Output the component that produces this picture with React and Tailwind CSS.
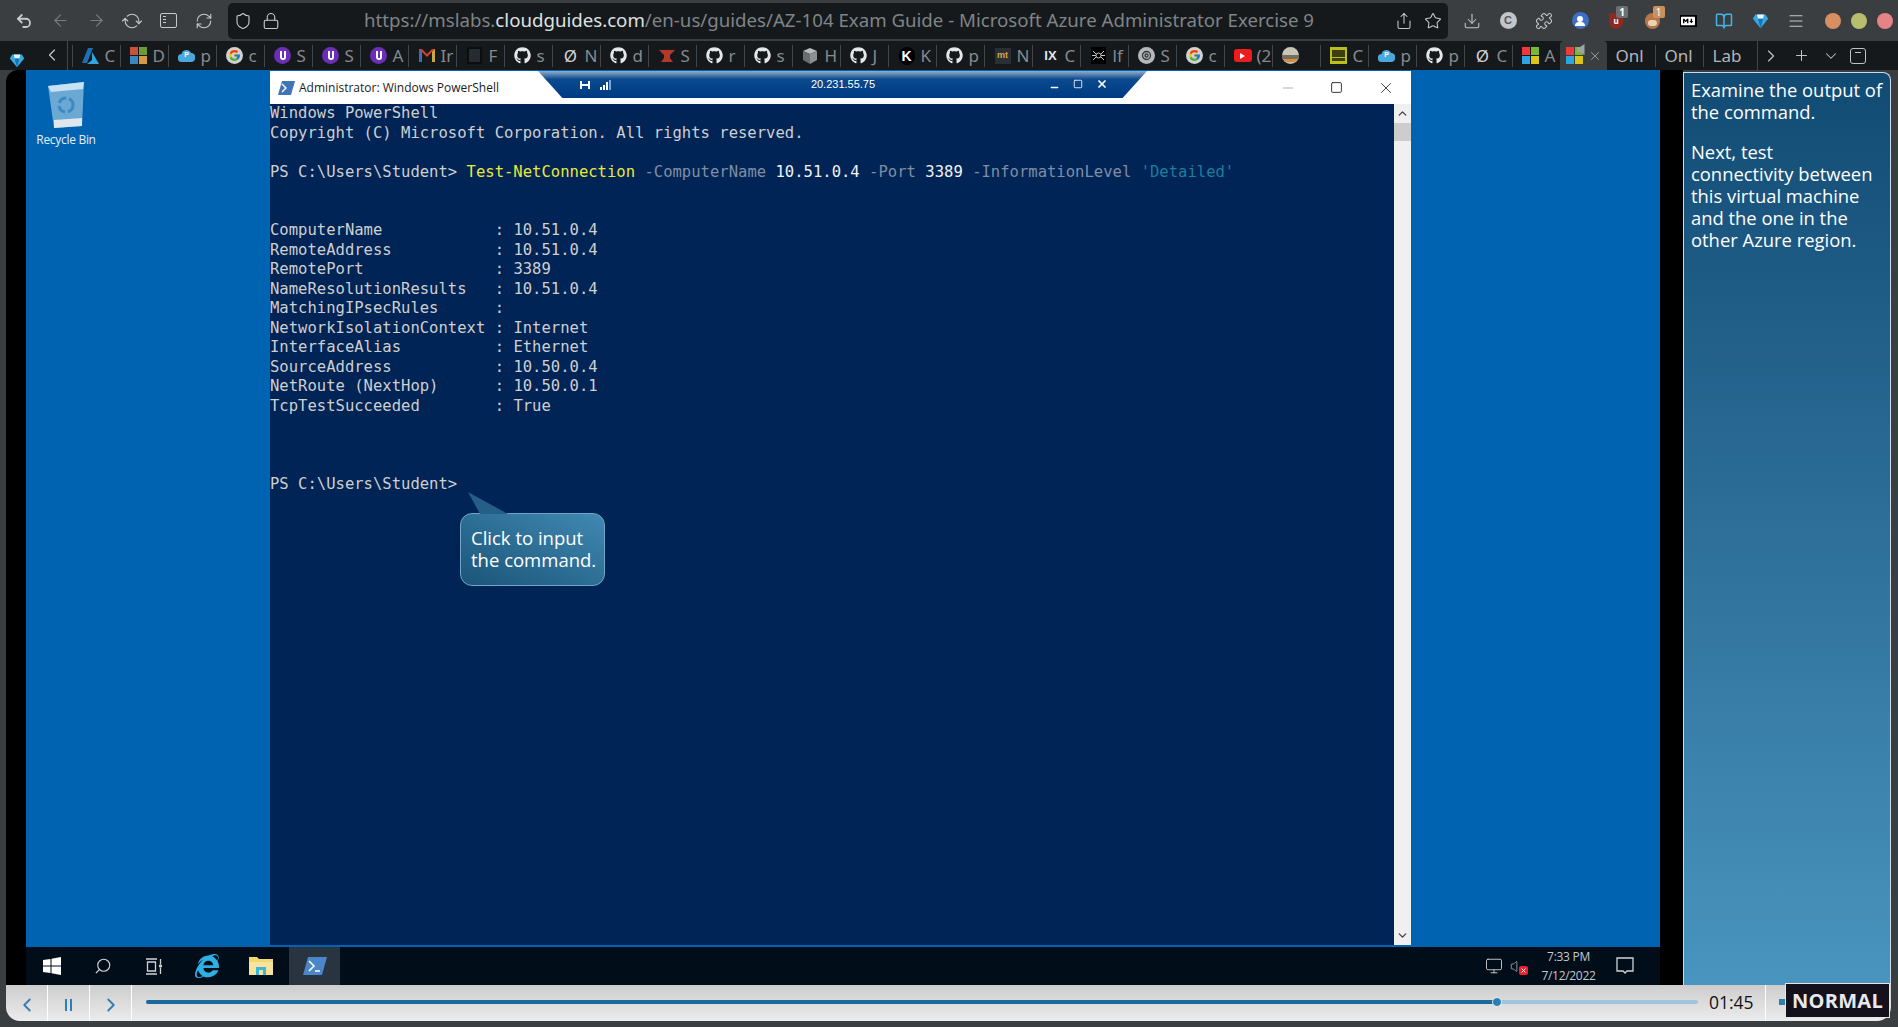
import React from "react";
import { Undo2, ArrowLeft, ArrowRight, RefreshCw, Shield, Lock, Share, Star, Download, Puzzle, Menu, ChevronLeft, ChevronRight, ChevronUp, ChevronDown, Plus, X, Minus, Square, BookOpen, Search, Monitor, Volume } from "lucide-react";
import { FaGithub, FaMarkdown, FaInternetExplorer } from "react-icons/fa";
import { FcGoogle } from "react-icons/fc";

const Gem = ({ s = 20 }) => (
  <svg width={s} height={s} viewBox="0 0 20 20">
    <polygon points="4,3 16,3 19,8 10,19 1,8" fill="#38a9e0" />
    <polygon points="6,3 14,3 13,8 7,8" fill="#e6f6ff" />
    <polygon points="7,8 13,8 10,19" fill="#1574b8" />
  </svg>
);
const Azure = () => (
  <svg width="17" height="18" viewBox="0 0 17 18">
    <polygon points="6,1 11,1 5,16 0,16" fill="#1e6fb5" />
    <polygon points="10,5 17,17 5,17 10,13" fill="#32a5e0" />
  </svg>
);
const MS = ({ bright }) => (
  <svg width="17" height="17" viewBox="0 0 17 17">
    <rect width="8" height="8" fill={bright ? "#ee3a3a" : "#c9503a"} />
    <rect x="9" width="8" height="8" fill={bright ? "#7cb82f" : "#6c9a3b"} />
    <rect y="9" width="8" height="8" fill={bright ? "#2ca5e0" : "#3b87bd"} />
    <rect x="9" y="9" width="8" height="8" fill={bright ? "#d8c61b" : "#d29a45"} />
  </svg>
);
const CloudP = () => (
  <span className="relative flex h-[16px] w-[17px] items-center justify-center">
    <svg width="17" height="13" viewBox="0 0 17 13"><path d="M4 13a4 4 0 0 1-.5-8A5 5 0 0 1 13 4a4.5 4.5 0 0 1 0 9z" fill="#4aa9dc" /></svg>
    <span className="absolute font-['Liberation_Sans'] text-[7px] font-bold text-white">P</span>
  </span>
);
const Google = () => (
  <span className="flex h-[17px] w-[17px] items-center justify-center rounded-full bg-[#cfd2d4]"><FcGoogle size={13} /></span>
);
const Udemy = () => (
  <span className="flex h-[17px] w-[17px] items-center justify-center rounded-full bg-[#6a2fb5]">
    <span className="h-[9px] w-[6px] rounded-b-[3px] border-x-2 border-b-2 border-white" />
  </span>
);
const Gmail = () => (
  <svg width="16" height="13" viewBox="0 0 16 13">
    <polygon points="0,0 3,0 3,13 0,13" fill="#3b6fb8" />
    <polygon points="13,0 16,0 16,13 13,13" fill="#c9a93b" />
    <polygon points="0,0 3,0 8,5 13,0 16,0 8,8" fill="#d1402f" />
  </svg>
);
const DarkBox = () => <span className="h-[17px] w-[15px] border-2 border-[#0b0e10] bg-[#252b31]" />;
const Git = () => <FaGithub size={17} color="#e4e6e7" />;
const Null = ({ c = "#cfd2d4" }) => <span className="font-['Noto_Sans'] text-[17px] leading-none" style={{ color: c }}>Ø</span>;
const Anvil = () => (
  <svg width="16" height="14" viewBox="0 0 16 14"><polygon points="0,1 16,1 11,6 11,9 14,13 2,13 5,9 5,6" fill="#b33a28" /></svg>
);
const Cube = () => (
  <svg width="15" height="16" viewBox="0 0 15 16">
    <polygon points="7,0 14,3 7,6 0,3" fill="#b9bcbe" />
    <polygon points="0,3 7,6 7,16 0,12" fill="#6a6e70" />
    <polygon points="14,3 7,6 7,16 14,12" fill="#8c9092" />
  </svg>
);
const KIcon = () => <span className="flex h-[18px] w-[16px] items-center justify-center rounded-full bg-black font-['Liberation_Sans'] text-[14px] font-bold leading-none text-white">K</span>;
const Mt = () => <span className="flex h-[16px] w-[16px] items-center justify-center bg-[#2a2f33] font-['Liberation_Sans'] text-[9px] font-bold leading-none text-[#d9a94a]">mt</span>;
const IX = () => <span className="font-['Liberation_Sans'] text-[13px] font-bold leading-none text-[#e4e6e7]">IX</span>;
const Spider = () => (
  <span className="flex h-[17px] w-[15px] items-center justify-center bg-black">
    <svg width="13" height="13" viewBox="0 0 13 13" stroke="#c8cbcd" fill="none"><circle cx="6.5" cy="6.5" r="2.5" /><path d="M1 2l3 3M12 2L9 5M0 6.5h4M13 6.5H9M1 11l3-3M12 11L9 8" /></svg>
  </span>
);
const OpenAI = () => (
  <span className="flex h-[17px] w-[17px] items-center justify-center rounded-full bg-[#b5b8ba]">
    <svg width="11" height="11" viewBox="0 0 11 11" fill="none" stroke="#33383b" strokeWidth="1.3"><circle cx="5.5" cy="5.5" r="4" /><circle cx="5.5" cy="5.5" r="1.5" /></svg>
  </span>
);
const YT = () => (
  <span className="flex h-[13px] w-[18px] items-center justify-center rounded-[3px] bg-[#ee1c1c]">
    <span className="h-0 w-0 border-y-[3px] border-l-[5px] border-y-transparent border-l-white" />
  </span>
);
const Bowl = () => (
  <svg width="17" height="17" viewBox="0 0 17 17"><circle cx="8.5" cy="8.5" r="8.5" fill="#c9c5b4" /><rect y="8" width="17" height="4" fill="#6f6f66" /><path d="M1 12h15a8 5 0 0 1-15 0z" fill="#d98a3a" /></svg>
);
const Laptop = () => (
  <span className="flex h-[17px] w-[17px] flex-col items-center justify-center gap-[1px] bg-[#b9c01c] p-[2px]">
    <span className="h-[7px] w-full bg-[#3b3f12]" />
    <span className="h-[3px] w-full bg-[#3b3f12]" />
  </span>
);

const tabs = [
  [<Azure />, "C"], [<MS />, "D"], [<CloudP />, "p"], [<Google />, "c"], [<Udemy />, "S"], [<Udemy />, "S"], [<Udemy />, "A"],
  [<Gmail />, "Ir"], [<DarkBox />, "F"], [<Git />, "s"], [<Null />, "N"], [<Git />, "d"], [<Anvil />, "S"], [<Git />, "r"],
  [<Git />, "s"], [<Cube />, "H"], [<Git />, "J"], [<KIcon />, "K"], [<Git />, "p"], [<Mt />, "N"], [<IX />, "C"], [<Spider />, "lf"],
  [<OpenAI />, "S"], [<Google />, "c"], [<YT />, "(2"], [<Bowl />, ""], [<Laptop />, "C"], [<CloudP />, "p"], [<Git />, "p"], [<Null />, "C"], [<MS bright />, "A"],
];

const Tab = ({ icon, text }) => (
  <div className="flex h-[22px] w-[48px] shrink-0 items-center border-l border-[#42474b] pl-[9px]">
    <span className="flex w-[18px] shrink-0 justify-center">{icon}</span>
    <span className="ml-[5px] whitespace-nowrap text-[17px] leading-[22px] text-[#868b8e]">{text}</span>
  </div>
);

const NavBtn = ({ children }) => <div className="flex h-[36px] w-[36px] shrink-0 items-center justify-center">{children}</div>;

const Badge = ({ c }) => (
  <span className={`absolute -right-[5px] -top-[7px] flex h-[12px] w-[12px] items-center justify-center rounded-[2px] text-[10px] leading-none text-white ${c}`}>1</span>
);

const Toolbar = () => (
  <div className="flex h-[41px] shrink-0 items-center bg-[#3a3e41] pl-[6px] font-['Noto_Sans'] text-[#c6c9cb]">
    <NavBtn><Undo2 size={18} strokeWidth={2.4} /></NavBtn>
    <NavBtn><ArrowLeft size={19} strokeWidth={1.4} className="text-[#777c7f]" /></NavBtn>
    <NavBtn><ArrowRight size={19} strokeWidth={1.4} className="text-[#777c7f]" /></NavBtn>
    <NavBtn><RefreshCw size={18} strokeWidth={1.5} className="rotate-[45deg]" /></NavBtn>
    <NavBtn>
      <span className="flex h-[15px] w-[17px] flex-col gap-[2px] rounded-[2px] border border-[#c6c9cb] py-[2px] pl-[2px]">
        <span className="h-[1px] w-[3px] bg-[#c6c9cb]" /><span className="h-[1px] w-[3px] bg-[#c6c9cb]" /><span className="h-[1px] w-[3px] bg-[#c6c9cb]" />
      </span>
    </NavBtn>
    <NavBtn><RefreshCw size={18} strokeWidth={1.5} /></NavBtn>
    <div className="ml-[6px] flex h-[36px] w-[1220px] items-center rounded-[5px] bg-[#15191c] pl-[6px]">
      <Shield size={18} strokeWidth={1.5} />
      <Lock size={18} strokeWidth={1.5} className="ml-[10px]" />
      <div className="ml-[84px] flex-1 whitespace-pre text-[18.67px] leading-none text-[#7f8487]">
        https://mslabs.<span className="text-[#dfe1e2]">cloudguides.com</span>/en-us/guides/AZ-104 Exam Guide - Microsoft Azure Administrator Exercise 9
      </div>
      <Share size={18} strokeWidth={1.4} />
      <Star size={18} strokeWidth={1.4} className="ml-[11px] mr-[6px]" />
    </div>
    <div className="ml-[6px] flex items-center">
      <NavBtn><Download size={18} strokeWidth={1.4} /></NavBtn>
      <NavBtn><span className="flex h-[17px] w-[17px] items-center justify-center rounded-full bg-[#c3c6c8] font-['Liberation_Sans'] text-[11px] font-bold text-[#50565a]">C</span></NavBtn>
      <NavBtn><Puzzle size={18} strokeWidth={1.4} /></NavBtn>
      <NavBtn>
        <span className="flex h-[17px] w-[17px] flex-col items-center justify-center rounded-full bg-[#3f6fc4]">
          <span className="h-[6px] w-[6px] rounded-full bg-white" />
          <span className="h-[4px] w-[10px] rounded-t-[4px] bg-white" />
        </span>
      </NavBtn>
      <NavBtn>
        <span className="relative flex h-[16px] w-[14px] items-center justify-center rounded-b-[7px] rounded-t-[2px] bg-[#8c2a22] text-[8px] font-bold leading-none text-white">u
          <Badge c="bg-[#6c7073]" />
        </span>
      </NavBtn>
      <NavBtn>
        <span className="relative h-[16px] w-[15px] rounded-full bg-[#b7764a]">
          <span className="absolute left-[3px] top-[7px] h-[6px] w-[9px] rounded-full bg-[#ecd3b5]" />
          <Badge c="bg-[#c8925f]" />
        </span>
      </NavBtn>
      <NavBtn><span className="flex h-[12px] w-[17px] items-center justify-center bg-black"><FaMarkdown size={14} color="#fff" /></span></NavBtn>
      <NavBtn><BookOpen size={18} strokeWidth={2} color="#3fb6e6" /></NavBtn>
      <NavBtn><Gem s={17} /></NavBtn>
      <NavBtn><Menu size={18} strokeWidth={1.4} /></NavBtn>
    </div>
    <div className="ml-[11px] flex items-center gap-[10px]">
      <span className="h-[16px] w-[16px] rounded-full bg-[#d78f62]" />
      <span className="h-[16px] w-[16px] rounded-full bg-[#b9bd6e]" />
      <span className="h-[16px] w-[16px] rounded-full bg-[#e58386]" />
    </div>
  </div>
);

const TabBar = () => (
  <div className="flex h-[29px] shrink-0 items-center bg-[#15191c] font-['Noto_Sans'] text-[#c0c3c5]">
    <div className="flex h-full w-[68px] shrink-0 items-center border-r border-[#42474b] pl-[9px]">
      <span className="mt-[8px]"><Gem s={16} /></span>
      <ChevronLeft size={20} strokeWidth={1.5} className="ml-[17px] -mt-[2px]" />
    </div>
    <div className="flex w-[3.5px] shrink-0" />
    {tabs.map(([icon, text], i) => <Tab key={i} icon={icon} text={text} />)}
    <div className="flex h-full w-[47px] shrink-0 items-center rounded-t-[4px] bg-[#3a3e41] pl-[6px]">
      <span className="relative flex items-center"><MS bright /><span className="absolute left-[11px] -top-[3px] h-[11px] w-[8px] bg-[#9ea3a6] [clip-path:polygon(0_30%,40%_30%,100%_0,100%_100%,40%_70%,0_70%)]" /></span>
      <X size={14} strokeWidth={1.3} className="ml-[5px] text-[#b5b9bb]" />
    </div>
    {["Onl", "Onl", "Lab"].map((t, i) => (
      <div key={i} className={`flex h-[22px] w-[48px] shrink-0 items-center pl-[9px] text-[17px] leading-[22px] text-[#b2b6b8] ${i ? "border-l border-[#42474b]" : ""}`}>{t}</div>
    ))}
    <div className="ml-[6px] flex h-full flex-1 items-center border-l border-[#42474b]">
      <ChevronRight size={20} strokeWidth={1.4} className="ml-[3px]" />
      <Plus size={17} strokeWidth={1.5} className="ml-[12px]" />
      <ChevronDown size={18} strokeWidth={1.4} className="ml-[12px]" />
      <span className="ml-[10px] flex h-[16px] w-[16px] items-start justify-center rounded-[3px] border border-[#c0c3c5]"><span className="mt-[3px] h-[1px] w-[6px] bg-[#c0c3c5]" /></span>
    </div>
  </div>
);

const Recycle = () => (
  <svg width="40" height="50" viewBox="0 0 40 50">
    <polygon points="2,6 38,2 36,46 8,48" fill="#8fbfe0" fillOpacity="0.75" />
    <polygon points="2,6 38,2 37,9 5,12" fill="#c7e2f4" />
    <polygon points="8,40 36,38 36,46 8,48" fill="#dfe7ec" />
    <circle cx="20" cy="25" r="7" fill="none" stroke="#3c8ac4" strokeWidth="3" strokeDasharray="9 3" />
  </svg>
);

const Line = ({ children }) => <div className="h-[19.53px] whitespace-pre">{children || " "}</div>;
const P = ({ children }) => <span className="text-[#7f8ea3]">{children}</span>;
const W = ({ children }) => <span className="text-[#f1f1f1]">{children}</span>;

const rows = [
  ["ComputerName            ", "10.51.0.4"],
  ["RemoteAddress           ", "10.51.0.4"],
  ["RemotePort              ", "3389"],
  ["NameResolutionResults   ", "10.51.0.4"],
  ["MatchingIPsecRules      ", ""],
  ["NetworkIsolationContext ", "Internet"],
  ["InterfaceAlias          ", "Ethernet"],
  ["SourceAddress           ", "10.50.0.4"],
  ["NetRoute (NextHop)      ", "10.50.0.1"],
  ["TcpTestSucceeded        ", "True"],
];

const Terminal = () => (
  <div className="relative flex flex-1 bg-[#012456]">
    <div className="flex-1 font-['DejaVu_Sans_Mono'] text-[15.55px] leading-[19.53px] text-[#cfcfcf]">
      <Line>Windows PowerShell</Line>
      <Line>Copyright (C) Microsoft Corporation. All rights reserved.</Line>
      <Line />
      <Line>PS C:\Users\Student&gt; <span className="text-[#e8e83a]">Test-NetConnection</span> <P>-ComputerName</P> <W>10.51.0.4</W> <P>-Port</P> <W>3389</W> <P>-InformationLevel</P> <span className="text-[#1b7f9e]">'Detailed'</span></Line>
      <Line /><Line />
      {rows.map(([k, v]) => <Line key={k}>{k}: {v}</Line>)}
      <Line /><Line /><Line />
      <Line>PS C:\Users\Student&gt;</Line>
    </div>
    <div className="flex w-[17px] shrink-0 flex-col items-center bg-[#f0f0f0] text-[#444]">
      <ChevronUp size={13} strokeWidth={2.5} className="my-[3px]" />
      <div className="h-[18px] w-full bg-[#cdcdcd]" />
      <div className="flex-1" />
      <ChevronDown size={13} strokeWidth={2.5} className="my-[3px]" />
    </div>
    <div className="absolute left-[190px] top-[409px] h-[73px] w-[145px] rounded-[12px] border border-[#6fa5c6] bg-gradient-to-tr from-[#1b5579] to-[#4089b3] pl-[10px] pt-[13px] font-['Open_Sans'] text-[18.5px] leading-[22px] text-white">
      <svg className="absolute -top-[22px] left-[7px]" width="40" height="23" viewBox="0 0 40 23"><polygon points="0,0 12,22 40,22" fill="#235f86" /></svg>
      <div className="whitespace-nowrap">Click to input</div>
      <div className="whitespace-nowrap">the command.</div>
    </div>
  </div>
);

const Window = () => (
  <div className="relative mt-[1px] flex h-[874px] w-[1141px] shrink-0 flex-col">
    <div className="flex h-[33px] shrink-0 items-center bg-white">
      <svg className="ml-[8px]" width="17" height="14" viewBox="0 0 17 14"><polygon points="4,0 17,0 13,14 0,14" fill="#3f74b8" /><path d="M4 3l4 4-4 4" stroke="#fff" fill="none" strokeWidth="1.4" /></svg>
      <span className="ml-[4px] font-['Open_Sans'] text-[12px] text-[#1b1b1b]">Administrator: Windows PowerShell</span>
      <div className="ml-auto flex items-center text-[#333]">
        <span className="flex w-[49px] justify-center"><Minus size={16} strokeWidth={1} className="text-[#888]" /></span>
        <span className="flex w-[49px] justify-center"><Square size={13} strokeWidth={1.8} /></span>
        <span className="flex w-[50px] justify-center"><X size={18} strokeWidth={1.2} /></span>
      </div>
    </div>
    <Terminal />
    <div className="absolute left-[268px] top-0 flex h-[27px] w-[609px] items-center bg-gradient-to-b from-[#8fb0cd] via-[#0a4a8f] via-30% to-[#003a82] font-['Liberation_Sans'] text-[11px] text-white [clip-path:polygon(0_0,100%_0,96%_100%,4%_100%)]">
      <div className="ml-[42px] flex items-center gap-[10px]">
        <span className="flex items-center"><span className="h-[8px] w-[2px] bg-white" /><span className="h-[2px] w-[6px] bg-white" /><span className="h-[8px] w-[2px] bg-white" /></span>
        <span className="flex items-end gap-[1px]"><span className="h-[3px] w-[2px] bg-white" /><span className="h-[5px] w-[2px] bg-white" /><span className="h-[8px] w-[2px] bg-white" /><span className="h-[10px] w-[2px] bg-[#7fa6c9]" /></span>
      </div>
      <span className="ml-[197px] w-[70px] text-center">20.231.55.75</span>
      <div className="ml-[171px] flex items-center gap-[13px]">
        <Minus size={11} strokeWidth={3} className="mt-[5px]" />
        <Square size={10} strokeWidth={2} className="-mt-[2px]" />
        <X size={12} strokeWidth={3.5} className="-mt-[2px]" />
      </div>
    </div>
  </div>
);

const Taskbar = () => (
  <div className="flex h-[38px] shrink-0 items-center bg-[#020d1a] text-[#cfd3d6]">
    <div className="flex w-[236px] items-center">
      <svg className="ml-[17px]" width="18" height="18" viewBox="0 0 18 18" fill="#fff"><polygon points="0,3 7.5,2 7.5,8.5 0,8.5" /><polygon points="8.5,1.8 18,0 18,8.5 8.5,8.5" /><polygon points="0,9.5 7.5,9.5 7.5,16 0,15" /><polygon points="8.5,9.5 18,9.5 18,18 8.5,16.2" /></svg>
      <Search size={18} strokeWidth={1.5} className="ml-[33px] -scale-x-100" />
      <svg className="ml-[33px]" width="18" height="17" viewBox="0 0 18 17" fill="none" stroke="#cfd3d6" strokeWidth="1.3"><path d="M1 1h11M1 16h11M2.5 4h8v9h-8zM15.5 1v5M15.5 10v6" /><circle cx="15.5" cy="8" r="1" fill="#cfd3d6" /></svg>
      <span className="relative ml-[32px] flex h-[24px] w-[24px] items-center justify-center"><FaInternetExplorer size={24} color="#2db1e4" /></span>
    </div>
    <svg className="ml-[-13px]" width="24" height="20" viewBox="0 0 24 20"><path d="M0 1h8l2 2h14v16H0z" fill="#f2d775" /><rect x="0" y="6" width="24" height="13" fill="#f8e39a" /><rect x="7" y="11" width="10" height="8" fill="#38b6e0" /><rect x="10" y="14" width="4" height="5" fill="#f8e39a" /></svg>
    <div className="ml-[16px] flex h-full w-[51px] items-center justify-center bg-[#2a3440]">
      <svg width="24" height="18" viewBox="0 0 24 18"><polygon points="5,0 24,0 19,18 0,18" fill="#4a86c8" /><path d="M6 4l5 5-5 5M12 14h5" stroke="#fff" fill="none" strokeWidth="1.6" /></svg>
    </div>
    <div className="ml-auto flex items-center">
      <Monitor size={18} strokeWidth={1.2} />
      <span className="relative ml-[7px] flex h-[18px] w-[18px] items-center">
        <Volume size={15} strokeWidth={1.3} className="text-[#aab0b4]" />
        <span className="absolute bottom-0 right-0 flex h-[9px] w-[9px] items-center justify-center rounded-[2px] bg-[#e8232f]"><X size={7} color="#fff" strokeWidth={3} /></span>
      </span>
      <div className="ml-[8px] w-[65px] text-center font-['Open_Sans'] text-[12px] leading-[19px] tracking-[-0.3px] text-[#c3c8cb]">
        <div>7:33 PM</div>
        <div>7/12/2022</div>
      </div>
      <svg className="ml-[15px] mr-[26px]" width="18" height="18" viewBox="0 0 18 18" fill="none" stroke="#cfd3d6" strokeWidth="1.3"><path d="M1 1h16v13h-6l-2 2-2-2H1z" /></svg>
    </div>
  </div>
);

const Stage = () => (
  <div className="flex h-[915px] shrink-0">
    <div className="w-[20px] shrink-0 rounded-tl-[12px] bg-black" />
    <div className="flex w-[1634px] shrink-0 flex-col bg-[#0063b1]">
      <div className="flex flex-1">
        <div className="flex w-[244px] shrink-0 flex-col">
          <div className="flex w-[80px] flex-col items-center pt-[10px]">
            <Recycle />
            <span className="mt-[1px] font-['Open_Sans'] text-[12px] tracking-[-0.3px] text-[#e3eef7]">Recycle Bin</span>
          </div>
        </div>
        <Window />
      </div>
      <Taskbar />
    </div>
    <div className="w-[23px] shrink-0 bg-black" />
    <div className="mt-[2px] w-[208px] shrink-0 rounded-tr-[8px] border-x border-t border-[#c9dbe6] bg-gradient-to-b from-[#114b74] to-[#4995bf] pl-[7px] pr-[2px] pt-[6px] font-['Open_Sans'] text-[18.4px] leading-[22px] text-white">
      <p>Examine the output of the command.</p>
      <p className="mt-[18px]">Next, test<br />connectivity between this virtual machine and the one in the other Azure region.</p>
    </div>
  </div>
);

const Ctl = ({ children }) => <div className="flex h-full w-[42px] shrink-0 items-center justify-center border-r border-white pt-[3px] text-[#2f7fb3]">{children}</div>;

const Player = () => (
  <div className="relative flex h-[36px] shrink-0 items-center rounded-b-[14px] bg-gradient-to-b from-[#cdcdcd] to-[#ececec]">
    <Ctl><ChevronLeft size={22} strokeWidth={2} /></Ctl>
    <Ctl><span className="flex gap-[3px]"><span className="h-[12px] w-[2px] bg-[#2f7fb3]" /><span className="h-[12px] w-[2px] bg-[#2f7fb3]" /></span></Ctl>
    <Ctl><ChevronRight size={22} strokeWidth={2} /></Ctl>
    <div className="relative ml-[14px] -mt-[3px] flex h-[4px] w-[1552px] rounded-full bg-[#9fc4dd]">
      <div className="h-full w-[1351px] rounded-l-full bg-[#1a6a9e]" />
      <div className="absolute left-[1347px] -top-[2px] h-[8px] w-[8px] rounded-full bg-[#2a7fb5] outline outline-[#d8e4ec]" />
    </div>
    <span className="ml-[11px] w-[45px] font-['Open_Sans'] text-[17.5px] leading-none text-[#111]">01:45</span>
    <div className="ml-[11px] h-full w-px bg-white" />
    <div className="ml-[13px] -mt-[2px] h-[6px] w-[6px] bg-[#2f7fb3]" />
    <div className="absolute bottom-[3px] right-[1px] flex h-[35px] w-[105px] items-center justify-center border border-[#e6e6e6] bg-[#14111c] font-['Open_Sans'] text-[20px] font-bold leading-none tracking-[0.3px] text-[#e8e8ec]">NORMAL</div>
  </div>
);

export default function App() {
  return (
    <div className="flex h-[1027px] w-[1898px] flex-col overflow-hidden bg-[#3a3e41]">
      <Toolbar />
      <TabBar />
      <div className="flex w-[1891px] flex-col pl-[6px]">
        <Stage />
        <Player />
      </div>
    </div>
  );
}
